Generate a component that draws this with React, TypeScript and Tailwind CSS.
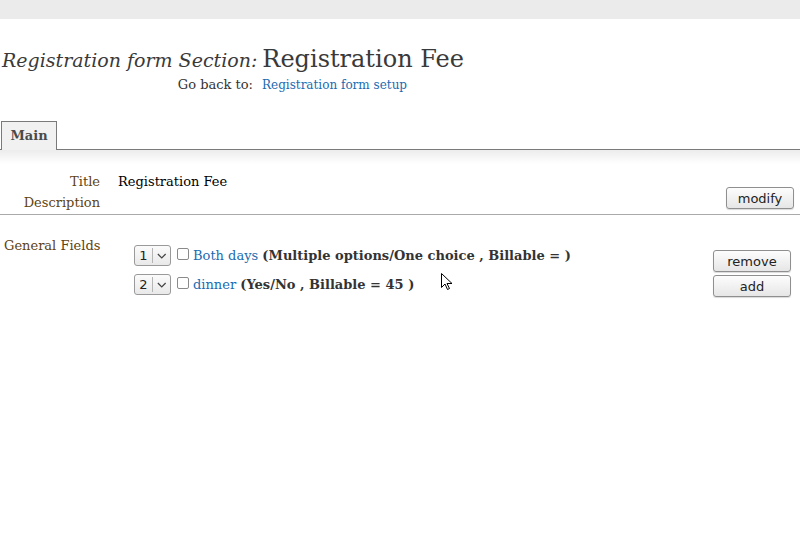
import React from "react";

const serif = "font-['DejaVu_Serif',serif]";
const sans = "font-['DejaVu_Sans',sans-serif]";

const Btn = ({ label, w }: { label: string; w: string }) => (
  <button
    className={`${sans} ${w} h-[22px] text-[13px] leading-none text-[#222] border border-[#8f8f8f] rounded-[3px] bg-gradient-to-b from-[#fdfdfd] to-[#e6e6e6] shadow-[0_1px_1px_rgba(0,0,0,0.15)]`}
  >
    {label}
  </button>
);

const Order = ({ n }: { n: number }) => (
  <div className="flex items-center w-[37px] h-[21px] border border-[#9a9a9a] rounded-[3px] bg-gradient-to-b from-[#fbfbfb] to-[#e9e9e9] shrink-0">
    <span className={`${sans} w-[17px] text-center text-[13px] text-[#222]`}>{n}</span>
    <span className="w-px h-[15px] bg-[#b5b5b5]" />
    <svg width="18" height="10" viewBox="0 0 18 10" className="text-[#444]">
      <path d="M5 3l4 4 4-4" fill="none" stroke="currentColor" strokeWidth="1.3" />
    </svg>
  </div>
);

const Check = () => (
  <span className="inline-block w-[12px] h-[12px] border border-[#8a8a8a] rounded-[2px] bg-white shrink-0" />
);

export default function App() {
  return (
    <div className={`${serif} relative w-[800px] h-[550px] bg-white text-[#333] overflow-hidden`}>
      <div className="h-[19px] bg-[#ebebeb]" />

      {/* heading */}
      <div className="pt-[25px] pl-[2px] flex items-baseline leading-[30px]">
        <span className="italic text-[19px] text-[#3a3a3a]">Registration form Section:</span>
        <span className="ml-[5px] text-[24px] text-[#3a3a3a]">Registration Fee</span>
      </div>
      <div className="flex items-baseline leading-[20px]">
        <span className="w-[262px] pr-[9px] text-right text-[13px] text-[#333]">Go back to:</span>
        <a className="text-[12px] text-[#1a6bb0]">Registration form setup</a>
      </div>

      {/* tabs */}
      <div className="mt-[26px] flex items-end border-b border-[#7a7a7a]">
        <div className="ml-[1px] w-[56px] h-[29px] border border-b-0 border-[#7a7a7a] bg-[#f1f1f1] flex items-center justify-center text-[13px] font-bold text-[#4a4a4a] -mb-px pb-px">
          Main
        </div>
      </div>
      <div className="h-[14px] bg-gradient-to-b from-[#ececec] to-white" />

      {/* title block */}
      <div className="flex text-[13px] leading-[21px] border-b border-[#aaaaaa] pt-[7px] pb-[1px]">
        <div className="w-[100px] text-right text-[#5e4312]">
          <div>Title</div>
          <div>Description</div>
        </div>
        <div className="ml-[18px] text-black">Registration Fee</div>
        <div className="ml-auto mr-[6px] mt-[16px]">
          <Btn label="modify" w="w-[68px]" />
        </div>
      </div>

      {/* fields */}
      <div className="flex text-[13px] leading-[20px] pt-[20px]">
        <div className="w-[134px] pl-[4px] pt-px text-[#5e4312]">General Fields</div>
        <div className="flex flex-col gap-[8px] mt-[10px]">
          <div className="flex items-center">
            <Order n={1} />
            <span className="ml-[6px]"><Check /></span>
            <span className="ml-[4px]">
              <a className="text-[#1a6bb0]">Both days</a>{" "}
              <b className="text-[#333]">(Multiple options/One choice , Billable = )</b>
            </span>
          </div>
          <div className="flex items-center">
            <Order n={2} />
            <span className="ml-[6px]"><Check /></span>
            <span className="ml-[4px]">
              <a className="text-[#1a6bb0]">dinner</a>{" "}
              <b className="text-[#333]">(Yes/No , Billable = 45 )</b>
            </span>
          </div>
        </div>
        <div className="ml-auto mr-[9px] mt-[15px] flex flex-col gap-[3px]">
          <Btn label="remove" w="w-[78px]" />
          <Btn label="add" w="w-[78px]" />
        </div>
      </div>

      {/* mouse pointer */}
      <svg className="absolute left-[440px] top-[272px]" width="14" height="20" viewBox="0 0 14 20">
        <path d="M1.5 1.5v14l3.5-3.5 2.5 5.5 2-1-2.5-5h5z" fill="white" stroke="black" strokeWidth="1" />
      </svg>
    </div>
  );
}
